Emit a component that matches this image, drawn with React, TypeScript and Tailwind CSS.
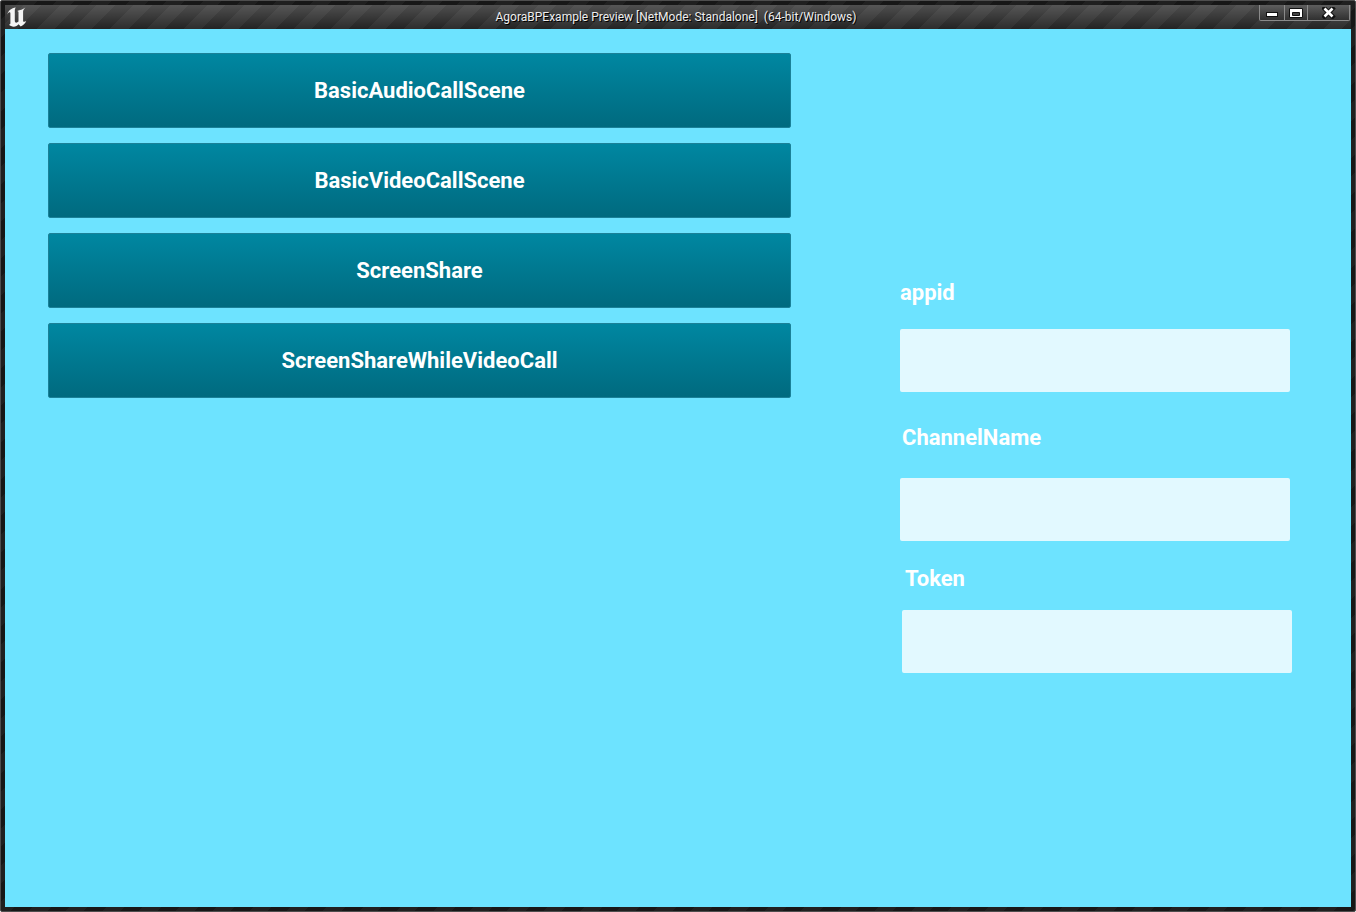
import React from "react";

const scenes = ["BasicAudioCallScene", "BasicVideoCallScene", "ScreenShare", "ScreenShareWhileVideoCall"];

const fields = [
  { id: "appid", label: "appid", group: "", labelClass: "", gap: "gap-[22px]" },
  { id: "channel", label: "ChannelName", group: "mt-8", labelClass: "pl-0.5", gap: "gap-[26px]" },
  { id: "token", label: "Token", group: "mt-6 pl-0.5", labelClass: "pl-[3px]", gap: "gap-[17px]" },
];

function Logo() {
  return (
    <svg width="20" height="20" viewBox="0 0 20 20" fill="#f4f4f4" aria-hidden="true">
      <path d="M0.1 7.4C1.2 3.6 4.4 1.1 8.8 0.4C8.1 1.1 7.8 1.9 7.8 3V13.6C7.8 15 8.3 15.7 9.2 15.7C10 15.7 10.8 15.3 11.5 14.6V5.4C11.5 4.4 11.2 4 10.2 3.9C13 3.3 15.8 2.3 18.4 0.5C16.7 2.2 16.1 3.3 16.1 4.8V13.4C16.1 14.5 16.5 14.9 17.2 14.8C17.9 14.8 18.6 14.4 19.3 13.7C18.2 16.5 16.2 18.5 13.7 19.4L11.6 17.2C10.3 18.8 8.6 19.7 6.7 19.7C4.9 19.7 3 18.9 1.9 17.6C2.9 17.6 3.4 17 3.4 16V6.6C3.4 5.5 3 5 2.2 5.3C1.4 5.6 0.7 6.4 0.1 7.4Z" />
    </svg>
  );
}

const controlClass =
  "flex h-4 items-center justify-center border border-t-0 border-[#8a8a8a] bg-linear-to-b from-[#5e5e5e] to-[#303030]";

function WindowControls() {
  return (
    <div className="flex">
      <button aria-label="Minimize" className={`${controlClass} w-[26px] rounded-bl-xs`}>
        <svg width="14" height="12" viewBox="0 0 14 12" aria-hidden="true">
          <rect x="1.5" y="5.5" width="11" height="4" fill="#fff" stroke="#111" />
        </svg>
      </button>
      <button aria-label="Maximize" className={`${controlClass} w-[23px] border-l-0`}>
        <svg width="14" height="12" viewBox="0 0 14 12" aria-hidden="true">
          <path d="M.5 1.5h13v9H.5z" fill="#fff" stroke="#111" />
          <path d="M3.5 5.5h7v3h-7z" fill="#444" stroke="#111" />
        </svg>
      </button>
      <button aria-label="Close" className={`${controlClass} w-[42px] rounded-br-xs border-l-0`}>
        <svg width="14" height="12" viewBox="0 0 14 12" aria-hidden="true">
          <path d="M2.5 1.5l8 8M10.5 1.5l-8 8" stroke="#111" strokeWidth="4.6" strokeLinecap="square" />
          <path d="M2.5 1.5l8 8M10.5 1.5l-8 8" stroke="#fff" strokeWidth="2.6" />
        </svg>
      </button>
    </div>
  );
}

export default function App() {
  return (
    <div className="flex min-h-screen flex-col rounded-xs border border-[#4e4e4e] bg-[#1b1b1b] bg-[repeating-linear-gradient(135deg,#171717_0_13px,#202020_13px_26px)] p-1 font-['Roboto',sans-serif]">
      <header className="grid h-6 grid-cols-[1fr_auto_1fr] items-start bg-[linear-gradient(to_bottom,rgba(255,255,255,0.21),rgba(255,255,255,0.02)),repeating-linear-gradient(135deg,#1f1f1f_0_13px,#292929_13px_26px)]">
        <div className="pt-0.5 pl-0.5">
          <Logo />
        </div>
        <h1 className="pt-1 pr-1 text-[12px] leading-4 whitespace-pre text-[#eeeeee] [text-shadow:1px_1px_0_#000]">
          {"AgoraBPExample Preview [NetMode: Standalone]  (64-bit/Windows)"}
        </h1>
        <div className="flex justify-end pr-px">
          <WindowControls />
        </div>
      </header>
      <main className="flex flex-1 items-start gap-[109px] bg-[#6de3ff] pt-6 pr-[59px] pl-[43px]">
        <nav className="flex flex-1 flex-col gap-[15px]">
          {scenes.map((scene) => (
            <button
              key={scene}
              className="h-[75px] rounded-xs border border-[#1b8198] bg-linear-to-b from-[#0087a1] to-[#006a7f] text-[22px] leading-7 font-bold text-white"
            >
              {scene}
            </button>
          ))}
        </nav>
        <form className="flex w-[392px] flex-col pt-[226px]">
          {fields.map((f) => (
            <div key={f.id} className={`flex flex-col ${f.gap} ${f.group}`}>
              <label htmlFor={f.id} className={`text-[22px] leading-7 font-bold text-white ${f.labelClass}`}>
                {f.label}
              </label>
              <input id={f.id} type="text" className="h-[63px] w-[390px] rounded-xs bg-[#e2f9ff] px-3 text-[22px] outline-none" />
            </div>
          ))}
        </form>
      </main>
    </div>
  );
}
